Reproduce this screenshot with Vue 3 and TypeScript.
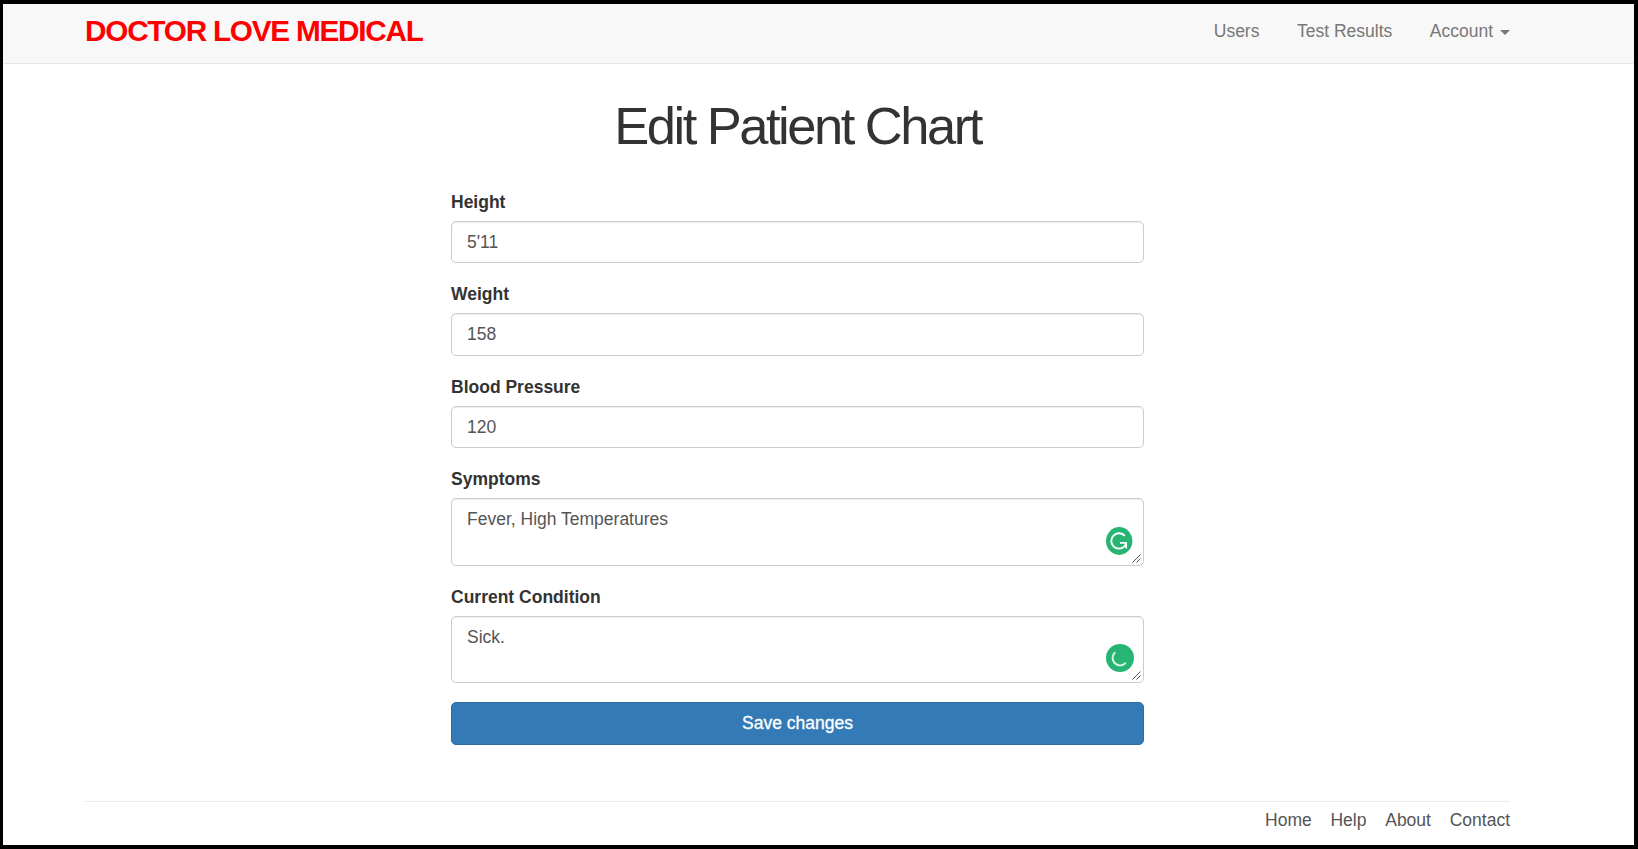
<script setup lang="ts">
import { ref } from 'vue'

interface Field {
  id: string
  label: string
  value: string
  kind: 'input' | 'textarea'
  badge?: 'ready' | 'loading'
}

const navLinks: string[] = ['Users', 'Test Results']
const footerLinks: string[] = ['Home', 'Help', 'About', 'Contact']

const fields = ref<Field[]>([
  { id: 'height', label: 'Height', value: "5'11", kind: 'input' },
  { id: 'weight', label: 'Weight', value: '158', kind: 'input' },
  { id: 'pressure', label: 'Blood Pressure', value: '120', kind: 'input' },
  { id: 'symptoms', label: 'Symptoms', value: 'Fever, High Temperatures', kind: 'textarea', badge: 'ready' },
  { id: 'condition', label: 'Current Condition', value: 'Sick.', kind: 'textarea', badge: 'loading' },
])
</script>

<template>
  <div class="page">
    <header class="navbar">
      <div class="container bar">
        <a class="logo" href="#">DOCTOR LOVE MEDICAL</a>
        <nav class="nav">
          <a v-for="link in navLinks" :key="link" href="#">{{ link }}</a>
          <a href="#" class="account">Account<span class="caret"></span></a>
        </nav>
      </div>
    </header>

    <main class="container main">
      <h1>Edit Patient Chart</h1>
      <form class="form" @submit.prevent>
        <div v-for="field in fields" :key="field.id" class="group">
          <label :for="field.id">{{ field.label }}</label>
          <input v-if="field.kind === 'input'" :id="field.id" v-model="field.value" class="control" type="text" />
          <div v-else class="area">
            <textarea :id="field.id" v-model="field.value" class="control" spellcheck="false"></textarea>
            <svg class="grip" viewBox="0 0 9 9">
              <path d="M0.5 8.5L8.5 0.5M4.5 8.5L8.5 4.5" />
            </svg>
            <svg class="badge" viewBox="0 0 28 28">
              <g v-if="field.badge === 'ready'" fill="none" stroke="#fff" stroke-width="1.9">
                <ellipse cx="13.2" cy="14" rx="13.2" ry="13.9" fill="#27b573" stroke="none" />
                <path d="M18.8 8.9A7.7 7.7 0 1 0 18.2 19.6L20 17.2" />
                <path d="M14 15.9H20.2V21.4" stroke-width="1.7" />
              </g>
              <g v-else fill="none" stroke="#d8f5e6" stroke-width="2" stroke-linecap="round">
                <circle cx="14" cy="14" r="14" fill="#27b573" stroke="none" />
                <path d="M8.7 8.9A7.2 7.2 0 1 0 19.2 19.2" />
              </g>
            </svg>
          </div>
        </div>
        <button class="save" type="submit">Save changes</button>
      </form>
    </main>

    <footer class="container footer">
      <a v-for="link in footerLinks" :key="link" href="#">{{ link }}</a>
    </footer>
  </div>
</template>

<style>
body {
  margin: 0;
  background: #fff;
}
</style>

<style scoped>
* {
  box-sizing: border-box;
}

.page {
  display: flex;
  flex-direction: column;
  height: 849px;
  overflow: hidden;
  border: solid #000;
  border-width: 4px 4px 4px 3px;
  font-family: "Liberation Sans", Arial, sans-serif;
  font-size: 17.5px;
  line-height: 25px;
  color: #333;
}

a {
  text-decoration: none;
}

.container {
  width: 1425px;
  margin: 0 0 0 82px;
}

.navbar {
  flex: none;
  height: 60px;
  background: #f8f8f8;
  border-bottom: 1px solid #e7e7e7;
}

.bar {
  display: flex;
  justify-content: space-between;
  align-items: flex-start;
}

.logo {
  padding-top: 14px;
  font-size: 29.75px;
  font-weight: 700;
  letter-spacing: -1.25px;
  color: #f00;
}

.nav {
  display: flex;
  gap: 37.5px;
  padding-top: 15px;
}

.nav a {
  color: #777;
}

.account {
  display: flex;
  align-items: center;
}

.caret {
  margin: 2px 0 0 7px;
  border-top: 5px solid #777;
  border-left: 5px solid transparent;
  border-right: 5px solid transparent;
}

.main {
  flex: 1;
}

h1 {
  margin: 36px 0 38.7px;
  font-size: 52.5px;
  font-weight: 400;
  line-height: 51px;
  letter-spacing: -2.5px;
  text-align: center;
}

.form {
  width: 693px;
  margin: 0 auto;
}

.group {
  margin-bottom: 18.75px;
}

label {
  display: block;
  margin-bottom: 6.25px;
  font-weight: 700;
}

.control {
  display: block;
  width: 100%;
  height: 42.5px;
  margin: 0;
  padding: 7.5px 15px;
  border: 1px solid #ccc;
  border-radius: 5px;
  background: #fff;
  box-shadow: inset 0 1px 1px rgba(0, 0, 0, 0.075);
  font: inherit;
  color: #555;
  outline: none;
}

.area {
  position: relative;
}

textarea.control {
  height: 67.5px;
  padding-top: 8px;
  resize: none;
  overflow: hidden;
}

.badge {
  position: absolute;
  right: 10px;
  bottom: 11px;
  width: 28px;
  height: 28px;
}

.grip {
  position: absolute;
  right: 3px;
  bottom: 3px;
  width: 9px;
  height: 9px;
  fill: none;
  stroke: #555;
  stroke-width: 1;
}

.save {
  display: block;
  width: 100%;
  height: 43px;
  padding: 0;
  border: 1px solid #2e6da4;
  border-radius: 5px;
  background: #337ab7;
  font: inherit;
  color: #fff;
  -webkit-text-stroke: 0.3px #fff;
}

.footer {
  display: flex;
  flex: none;
  justify-content: flex-end;
  gap: 18.75px;
  height: 44px;
  padding-top: 6px;
  border-top: 1px solid #eaeaea;
}

.footer a {
  color: #555;
}
</style>
